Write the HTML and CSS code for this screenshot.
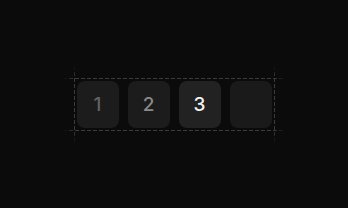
FILE: index.html
```html
<!DOCTYPE html>
<html lang="en">
<head>
    <meta charset="UTF-8">
    <meta name="viewport" content="width=device-width, initial-scale=1.0">
    <title>Slots</title>
    <link rel="stylesheet" href="styles.css">
</head>
<body>
    <div class="slot-frame">
        <div class="slot slot-dim">1</div>
        <div class="slot slot-mid">2</div>
        <div class="slot slot-active">3</div>
        <div class="slot slot-empty"></div>
    </div>
</body>
</html>
```

FILE: styles.css
```css
body {
    margin: 0;
    height: 100vh;
    background-color: #0b0b0b;
    display: flex;
    justify-content: center;
    align-items: center;
    font-family: Inter, "Liberation Sans", sans-serif;
}

.slot-frame {
    position: relative;
    display: flex;
    gap: 9px;
    padding: 2px;
    border: 1px solid transparent;
}

/* guide lines running past the frame */
.slot-frame::before,
.slot-frame::after {
    content: "";
    position: absolute;
    pointer-events: none;
}

.slot-frame::before {
    left: -12px;
    right: -12px;
    top: -1px;
    bottom: -1px;
    background:
        repeating-linear-gradient(to right, #3c3c3c 0 4px, transparent 4px 6px) top / 100% 1px no-repeat,
        repeating-linear-gradient(to right, #3c3c3c 0 4px, transparent 4px 6px) bottom / 100% 1px no-repeat;
    -webkit-mask-image: linear-gradient(to right, transparent, #000 12px, #000 calc(100% - 12px), transparent);
    mask-image: linear-gradient(to right, transparent, #000 12px, #000 calc(100% - 12px), transparent);
}

.slot-frame::after {
    top: -13px;
    bottom: -13px;
    left: -1px;
    right: -1px;
    background:
        repeating-linear-gradient(to bottom, #3c3c3c 0 4px, transparent 4px 6px) left / 1px 100% no-repeat,
        repeating-linear-gradient(to bottom, #3c3c3c 0 4px, transparent 4px 6px) right / 1px 100% no-repeat;
    -webkit-mask-image: linear-gradient(to bottom, transparent, #000 12px, #000 calc(100% - 12px), transparent);
    mask-image: linear-gradient(to bottom, transparent, #000 12px, #000 calc(100% - 12px), transparent);
}

.slot {
    width: 42px;
    height: 47px;
    border-radius: 8px;
    background-color: #1c1c1c;
    display: flex;
    justify-content: center;
    align-items: center;
    font-size: 19px;
    font-weight: 500;
}

.slot-dim {
    color: #636363;
}

.slot-mid {
    color: #8a8a8a;
}

.slot-active {
    background-color: #222222;
    color: #f2f2f2;
}

.slot-empty {
    background-color: #1a1a1a;
}
```
